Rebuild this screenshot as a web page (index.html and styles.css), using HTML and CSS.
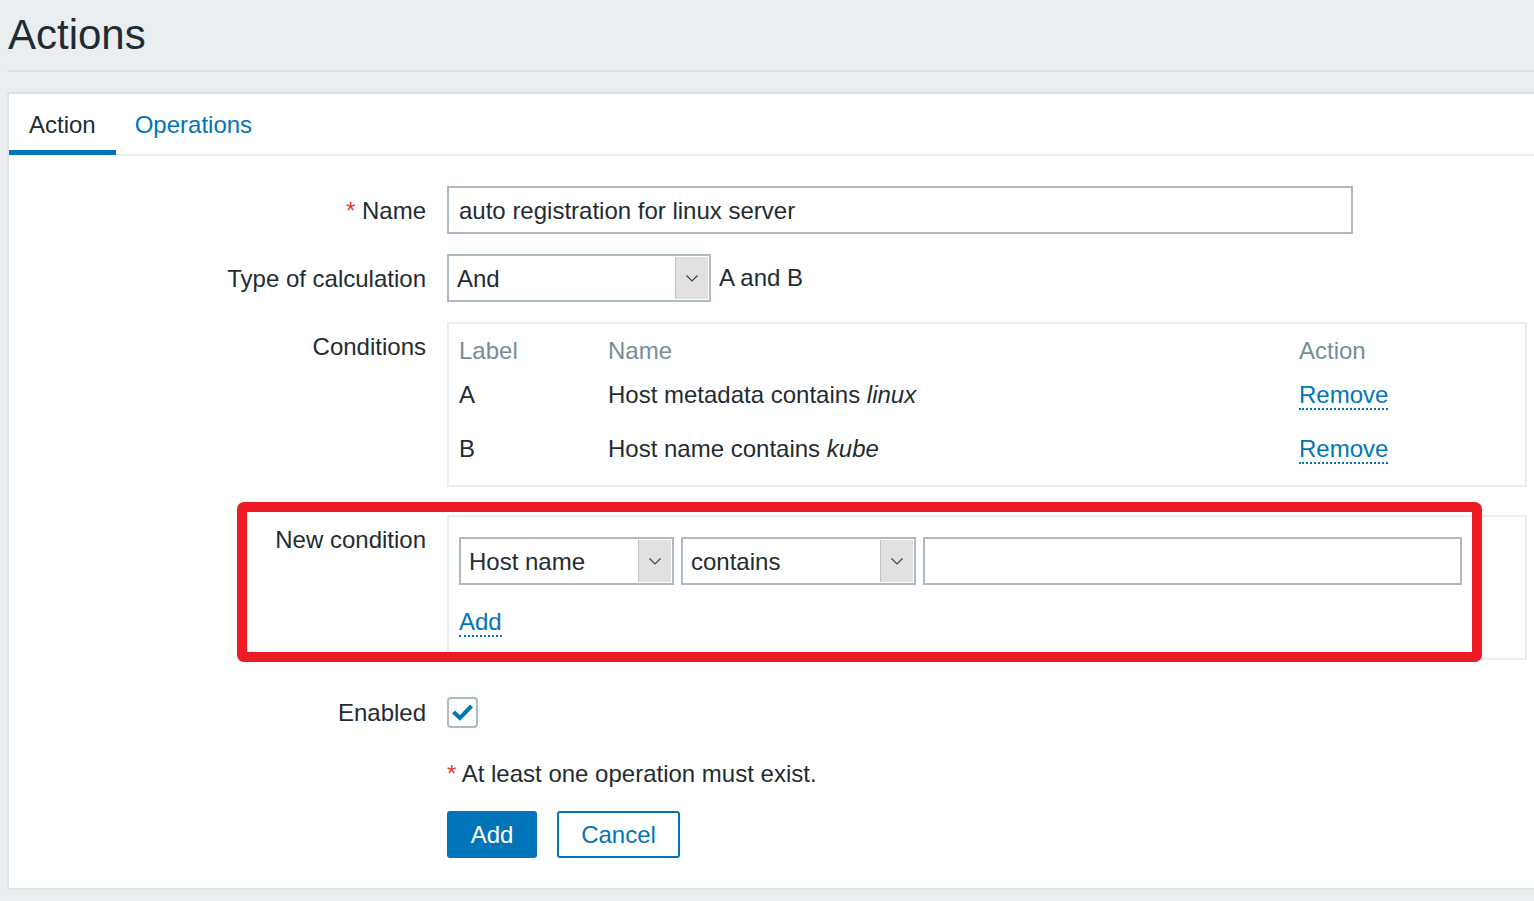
FILE: index.html
```html
<!DOCTYPE html>
<html lang="en">
<head>
<meta charset="utf-8">
<title>Actions</title>
<link rel="stylesheet" href="styles.css">
</head>
<body>
<header class="page-header">
  <h1 class="page-title">Actions</h1>
</header>

<main class="panel">
  <ul class="tabs">
    <li class="tab tab-active"><a href="#">Action</a></li>
    <li class="tab"><a href="#">Operations</a></li>
  </ul>

  <form class="form">
    <div class="row row-name">
      <label class="label"><span class="req">*</span> Name</label>
      <div class="field">
        <div class="text-input input-name">auto registration for linux server</div>
      </div>
    </div>

    <div class="row row-calc">
      <label class="label">Type of calculation</label>
      <div class="field field-inline">
        <div class="select select-calc">
          <span class="select-value">And</span>
          <span class="select-btn"><svg width="12" height="7" viewBox="0 0 12 7"><polyline points="0.5,0.5 6,6 11.5,0.5" fill="none" stroke="#3b4448" stroke-width="1.2"/></svg></span>
        </div>
        <span class="calc-expr">A and B</span>
      </div>
    </div>

    <div class="row row-conditions">
      <label class="label">Conditions</label>
      <div class="field">
        <div class="box cond-box">
          <div class="cond-line cond-head">
            <span>Label</span><span>Name</span><span>Action</span>
          </div>
          <div class="cond-line cond-a">
            <span>A</span><span>Host metadata contains <em>linux</em></span><span><a class="link" href="#">Remove</a></span>
          </div>
          <div class="cond-line cond-b">
            <span>B</span><span>Host name contains <em>kube</em></span><span><a class="link" href="#">Remove</a></span>
          </div>
        </div>
      </div>
    </div>

    <div class="row row-newcond">
      <label class="label">New condition</label>
      <div class="field">
        <div class="box new-box">
          <div class="new-controls">
            <div class="select select-type">
              <span class="select-value">Host name</span>
              <span class="select-btn"><svg width="12" height="7" viewBox="0 0 12 7"><polyline points="0.5,0.5 6,6 11.5,0.5" fill="none" stroke="#3b4448" stroke-width="1.2"/></svg></span>
            </div>
            <div class="select select-op">
              <span class="select-value">contains</span>
              <span class="select-btn"><svg width="12" height="7" viewBox="0 0 12 7"><polyline points="0.5,0.5 6,6 11.5,0.5" fill="none" stroke="#3b4448" stroke-width="1.2"/></svg></span>
            </div>
            <div class="text-input input-value"></div>
          </div>
          <div class="new-add"><a class="link" href="#">Add</a></div>
        </div>
      </div>
    </div>

    <div class="row row-enabled">
      <label class="label">Enabled</label>
      <div class="field">
        <span class="checkbox"><svg width="31" height="30" viewBox="0 0 31 30"><polyline points="6.5,15 13,21 24.5,9" fill="none" stroke="#0275b8" stroke-width="4" stroke-linejoin="miter"/></svg></span>
      </div>
    </div>

    <div class="row row-msg">
      <span class="label"></span>
      <div class="field"><span class="req">*</span> At least one operation must exist.</div>
    </div>

    <div class="row row-buttons">
      <span class="label"></span>
      <div class="field buttons">
        <button type="button" class="btn btn-primary">Add</button>
        <button type="button" class="btn btn-alt">Cancel</button>
      </div>
    </div>
  </form>
</main>

<div class="highlight"></div>
</body>
</html>
```

FILE: styles.css
```css
html, body {
  margin: 0;
  padding: 0;
}

body {
  position: relative;
  background: #ebeef0;
  color: #1f2c33;
  font-family: "Liberation Sans", Arial, sans-serif;
  font-size: 24px;
  line-height: 30px;
  width: 1534px;
  height: 901px;
  overflow: hidden;
}

.page-header {
  margin-left: 7px;
  padding: 14px 0 14px 1px;
  border-bottom: 2px solid #dde2e5;
}

.page-title {
  margin: 0;
  font-size: 42px;
  line-height: 42px;
  font-weight: normal;
  color: #1f2c33;
}

.panel {
  display: block;
  margin: 20px 0 0 7px;
  background: #fff;
  border: 2px solid #dee3e6;
  border-right: 0;
}

.tabs {
  display: flex;
  margin: 0;
  padding: 0;
  list-style: none;
  border-bottom: 2px solid #ebeef0;
}

.tab {
  margin-bottom: -1px;
  border-bottom: 5px solid transparent;
}

.tab a {
  display: block;
  padding: 6px 20px 0 19px;
  line-height: 50px;
  color: #0275b8;
  text-decoration: none;
}

.tab-active {
  border-bottom-color: #0275b8;
}

.tab-active a {
  color: #1f2c33;
  padding-left: 20px;
  padding-right: 20px;
}

.form {
  padding: 30px 0 30px 0;
}

.row {
  display: grid;
  grid-template-columns: 417px 1080px;
  column-gap: 21px;
}

.label {
  text-align: right;
  padding-top: 10px;
  line-height: 30px;
  color: #1f2c33;
}

.req {
  color: #e33734;
}

.row-calc,
.row-conditions {
  margin-top: 20px;
}

.row-newcond {
  margin-top: 28px;
}

.row-enabled {
  margin-top: 37px;
  align-items: center;
}

.row-enabled .label {
  padding-top: 1px;
}

.row-msg {
  margin-top: 31px;
}

.row-msg .label {
  padding-top: 0;
}

.row-buttons {
  margin-top: 22px;
}

.field-inline {
  display: flex;
  align-items: center;
}

.text-input {
  box-sizing: border-box;
  height: 48px;
  border: 2px solid #acbbc2;
  background: #fff;
  padding: 0 10px;
  line-height: 46px;
  white-space: nowrap;
}

.input-name {
  width: 906px;
}

.select {
  box-sizing: border-box;
  display: flex;
  height: 48px;
  border: 2px solid #acbbc2;
  background: #fff;
}

.select-value {
  flex: 1;
  padding-left: 8px;
  line-height: 46px;
  white-space: nowrap;
}

.select-btn {
  width: 32px;
  display: flex;
  align-items: center;
  justify-content: center;
  background: #e1e1e1;
  border-left: 1px solid #c4c4c4;
  margin: 1px 1px 1px 0;
}

.select-calc {
  width: 264px;
}

.calc-expr {
  margin-left: 8px;
}

.box {
  box-sizing: border-box;
  width: 1080px;
  border: 2px solid #ebeef0;
  background: #fff;
}

.cond-box {
  padding: 12px 10px 21px 10px;
}

.cond-line {
  display: grid;
  grid-template-columns: 149px 691px 1fr;
  line-height: 30px;
}

.cond-head {
  color: #768d99;
}

.cond-a {
  margin-top: 14px;
}

.cond-b {
  margin-top: 24px;
}

.link {
  color: #0275b8;
  text-decoration: none;
  border-bottom: 2px dotted #0275b8;
}

.new-box {
  padding: 20px 10px 21px 10px;
}

.new-controls {
  display: flex;
  column-gap: 7px;
}

.select-type {
  width: 215px;
}

.select-op {
  width: 235px;
}

.input-value {
  width: 539px;
}

.new-add {
  margin-top: 22px;
  line-height: 30px;
}

.checkbox {
  box-sizing: border-box;
  display: block;
  width: 31px;
  height: 31px;
  border: 2px solid #acbbc2;
  border-radius: 4px;
  background: #fff;
}

.checkbox svg {
  display: block;
  margin: -2px 0 0 -2px;
}

.buttons {
  display: flex;
  column-gap: 20px;
}

.btn {
  box-sizing: border-box;
  height: 47px;
  font-family: "Liberation Sans", Arial, sans-serif;
  font-size: 24px;
  border-radius: 3px;
  padding: 0;
  cursor: pointer;
}

.btn-primary {
  width: 90px;
  background: #0275b8;
  border: 2px solid #0275b8;
  color: #fff;
}

.btn-alt {
  width: 123px;
  background: #fff;
  border: 2px solid #0275b8;
  color: #0275b8;
}

.highlight {
  position: absolute;
  left: 237px;
  top: 502px;
  width: 1245px;
  height: 160px;
  box-sizing: border-box;
  border: 10px solid #ed1c24;
  border-radius: 7px;
  pointer-events: none;
}
```
